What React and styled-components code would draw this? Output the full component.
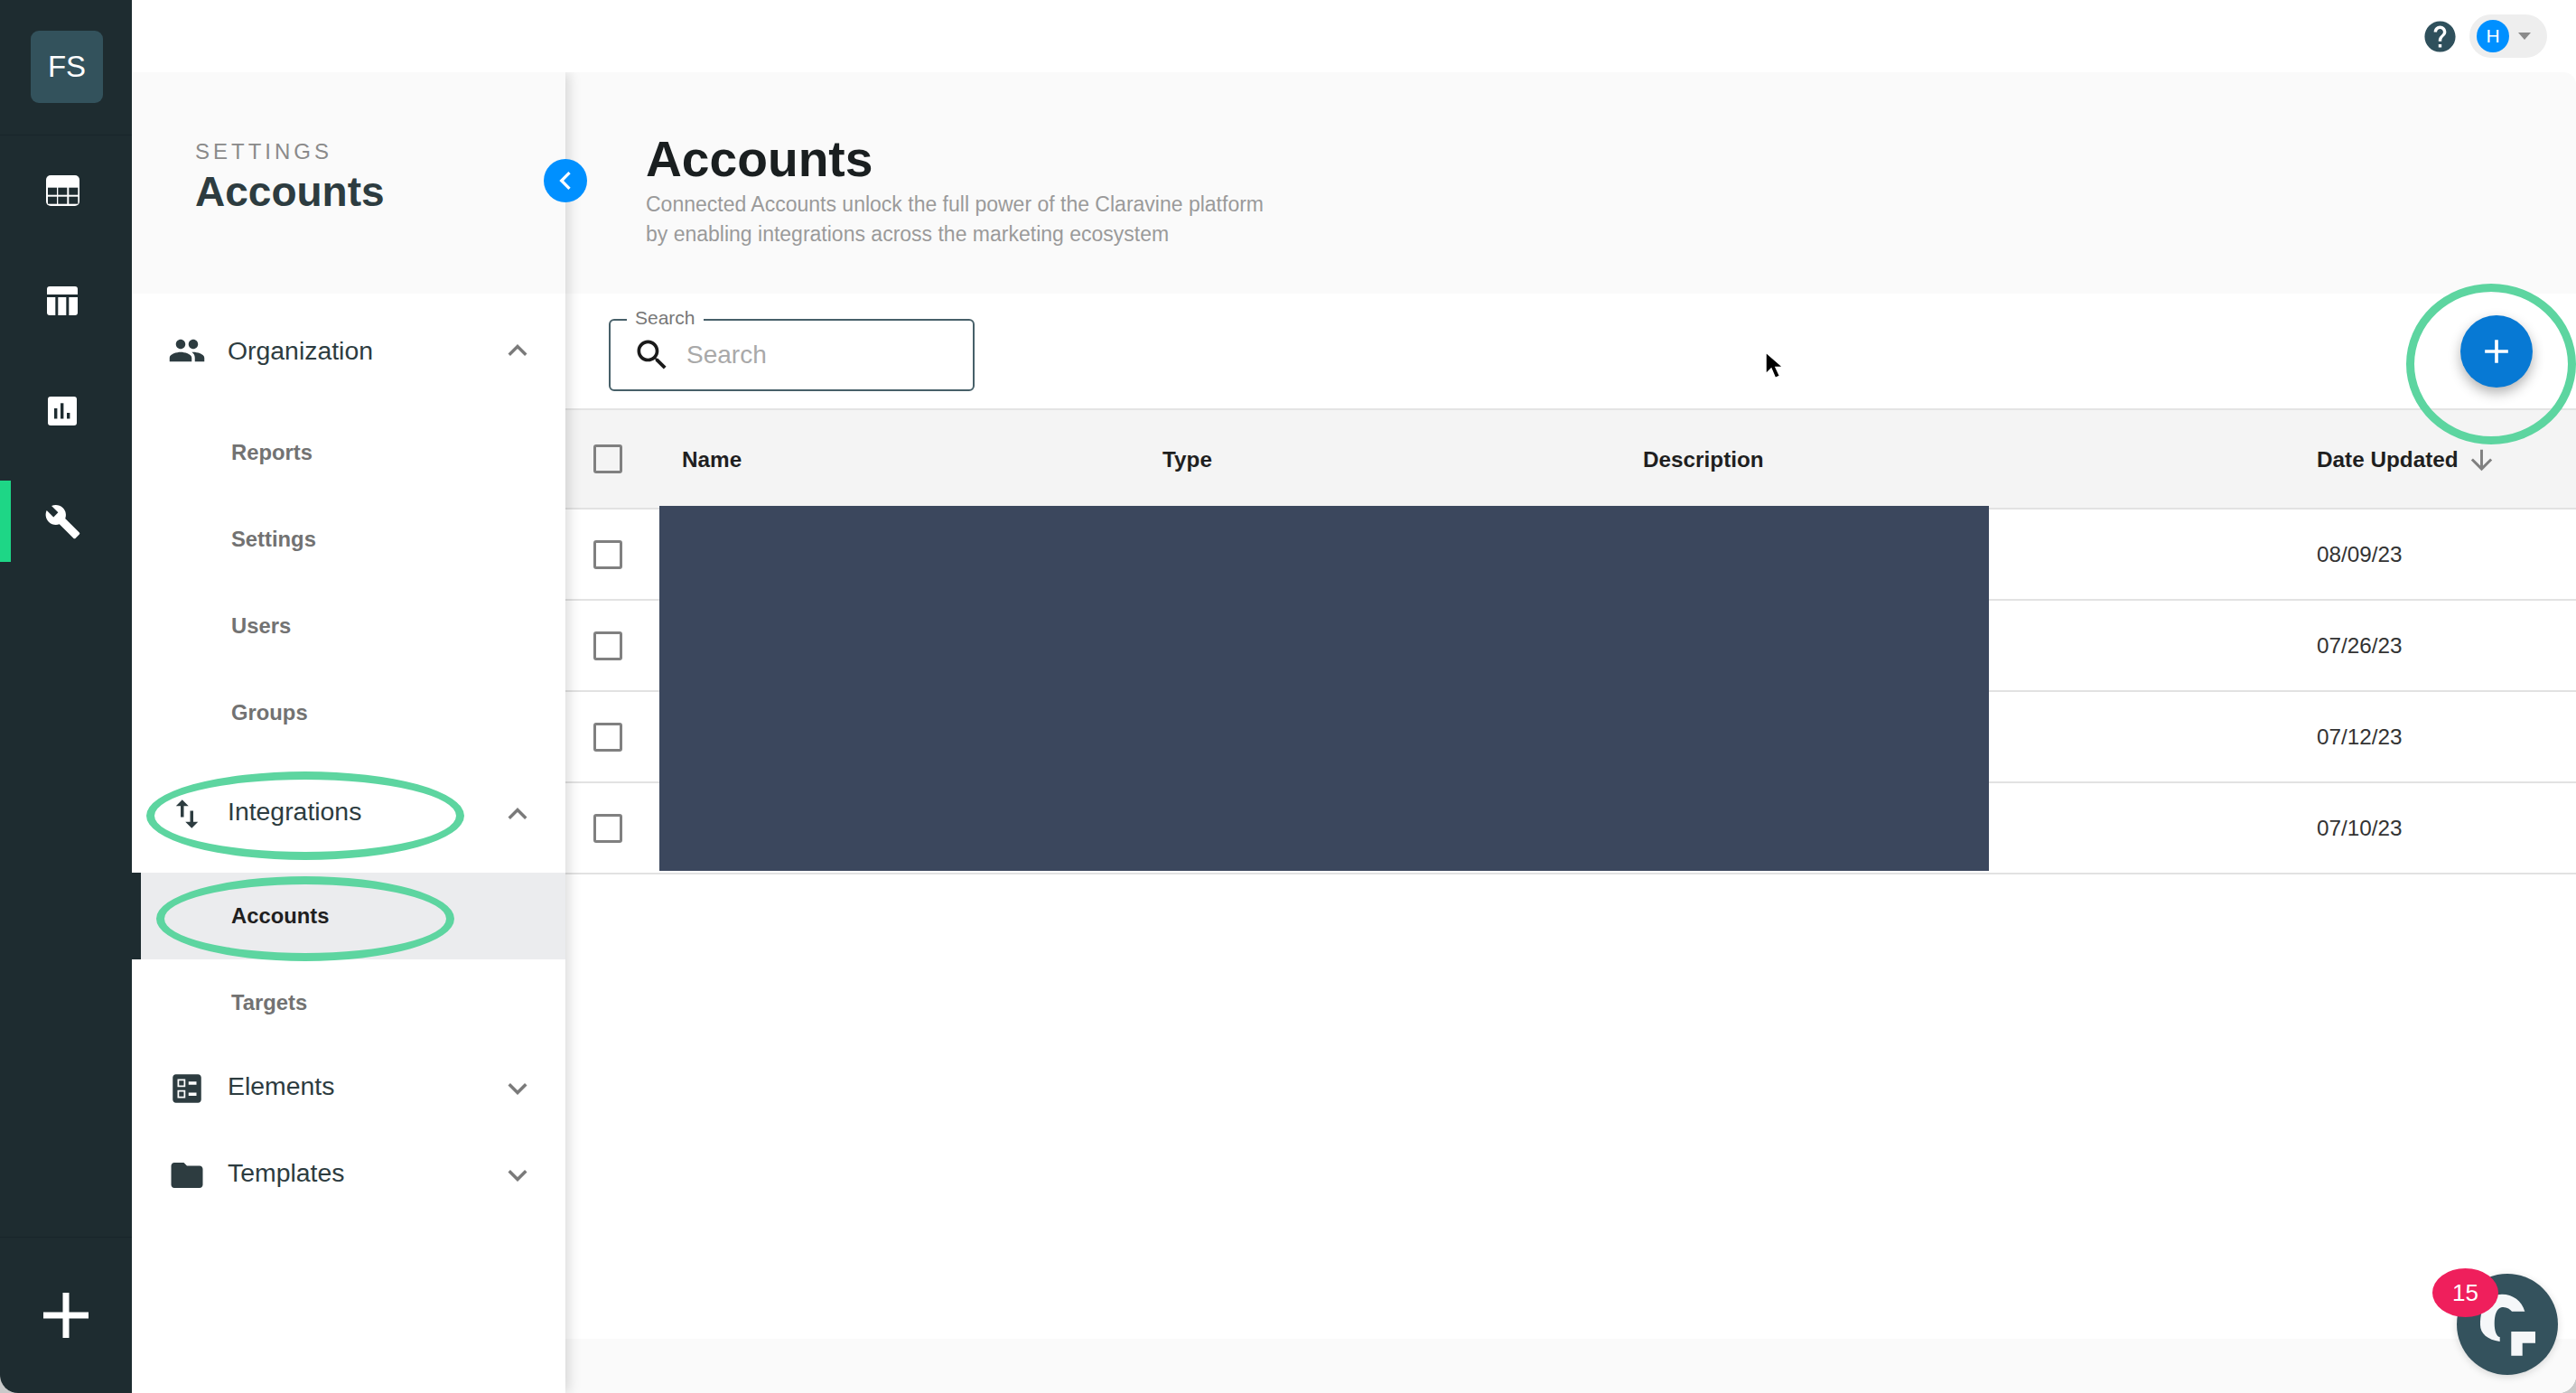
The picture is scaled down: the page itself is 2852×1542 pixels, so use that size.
import styled, { createGlobalStyle } from "styled-components";

const GlobalStyle = createGlobalStyle`
  html, body {
    margin: 0;
    height: 100%;
    background: #c9c9c9;
    font-family: "Liberation Sans", Arial, sans-serif;
  }
  #root {
    height: 100%;
  }
  * {
    box-sizing: border-box;
  }
`;

const ICONS = {
  people:
    "M16 11c1.66 0 2.99-1.34 2.99-3S17.66 5 16 5c-1.66 0-3 1.34-3 3s1.34 3 3 3zm-8 0c1.66 0 2.99-1.34 2.99-3S9.66 5 8 5C6.34 5 5 6.34 5 8s1.34 3 3 3zm0 2c-2.33 0-7 1.17-7 3.5V19h14v-2.5c0-2.33-4.67-3.5-7-3.5zm8 0c-.29 0-.62.02-.97.05 1.16.84 1.97 1.97 1.97 3.45V19h6v-2.5c0-2.33-4.67-3.5-7-3.5z",
  importExport: "M9 3 5 6.99h3V14h2V6.99h3L9 3zm7 14.01V10h-2v7.01h-3L15 21l4-3.99h-3z",
  ballot:
    "M13 9.5h5v-2h-5v2zm0 7h5v-2h-5v2zm6 4.5H5c-1.1 0-2-.9-2-2V5c0-1.1.9-2 2-2h14c1.1 0 2 .9 2 2v14c0 1.1-.9 2-2 2zM6 11h5V6H6v5zm1-4h3v3H7V7zM6 18h5v-5H6v5zm1-4h3v3H7v-3z",
  folder: "M10 4H4c-1.1 0-1.99.9-1.99 2L2 18c0 1.1.9 2 2 2h16c1.1 0 2-.9 2-2V8c0-1.1-.9-2-2-2h-8l-2-2z",
  wrench:
    "M22.7 19l-9.1-9.1c.9-2.3.4-5-1.5-6.9-2-2-5-2.4-7.4-1.3L9 6 6 9 1.6 4.7C.4 7.1.9 10.1 2.9 12.1c1.9 1.9 4.6 2.4 6.9 1.5l9.1 9.1c.4.4 1 .4 1.4 0l2.3-2.3c.5-.4.5-1.1.1-1.4z",
  search:
    "M15.5 14h-.79l-.28-.27C15.41 12.59 16 11.11 16 9.5 16 5.91 13.09 3 9.5 3S3 5.91 3 9.5 5.91 16 9.5 16c1.61 0 3.09-.59 4.23-1.57l.27.28v.79l5 4.99L20.49 19l-4.99-5zm-6 0C7.01 14 5 11.99 5 9.5S7.01 5 9.5 5 14 7.01 14 9.5 11.99 14 9.5 14z",
  help:
    "M12 2C6.48 2 2 6.48 2 12s4.48 10 10 10 10-4.48 10-10S17.52 2 12 2zm1 17h-2v-2h2v2zm2.07-7.75l-.9.92C13.45 12.9 13 13.5 13 15h-2v-.5c0-1.1.45-2.1 1.17-2.83l1.24-1.26c.37-.36.59-.86.59-1.41 0-1.1-.9-2-2-2s-2 .9-2 2H8c0-2.21 1.79-4 4-4s4 1.79 4 4c0 .88-.36 1.68-.93 2.25z",
  less: "M12 8l-6 6 1.41 1.41L12 10.83l4.59 4.58L18 14z",
  more: "M16.59 8.59L12 13.17 7.41 8.59 6 10l6 6 6-6z",
  left: "M15.41 7.41L14 6l-6 6 6 6 1.41-1.41L10.83 12z",
  down: "M20 12l-1.41-1.41L13 16.17V4h-2v12.17l-5.58-5.59L4 12l8 8 8-8z",
  plus: "M19 13h-6v6h-2v-6H5v-2h6V5h2v6h6v2z",
};

const Icon = ({ name, size = 42, color = "currentColor" }) => (
  <svg width={size} height={size} viewBox="0 0 24 24" fill={color} fillRule="evenodd" style={{ flexShrink: 0 }}>
    <path d={ICONS[name]} />
  </svg>
);

const Shell = styled.div`
  display: flex;
  height: 100vh;
  overflow: hidden;
  border-radius: 0 0 20px 20px;
  background: #fff;
`;

const Rail = styled.aside`
  display: flex;
  flex-direction: column;
  flex: 0 0 146px;
  background: #1e2c30;
`;

const RailTop = styled.div`
  display: flex;
  align-items: center;
  justify-content: center;
  height: 150px;
  padding: 0 0 2px 2px;
  border-bottom: 1px solid #18252a;
`;

const OrgBadge = styled.div`
  display: flex;
  align-items: center;
  justify-content: center;
  width: 80px;
  height: 80px;
  border-radius: 9px;
  background: #33525c;
  color: #fff;
  font-size: 33px;
`;

const RailItem = styled.div`
  position: relative;
  display: flex;
  align-items: center;
  justify-content: center;
  height: 122px;
  padding-right: 8px;

  ${(p) =>
    p.$active &&
    `&::before {
      content: "";
      position: absolute;
      left: 0;
      top: 16px;
      width: 12px;
      height: 90px;
      background: #1ed686;
    }`}
`;

const RailBottom = styled.div`
  display: flex;
  align-items: center;
  justify-content: center;
  margin-top: auto;
  height: 173px;
  padding-right: 1px;
  border-top: 1px solid #18252a;
`;

const Content = styled.div`
  display: flex;
  flex-direction: column;
  flex: 1;
  min-width: 0;
`;

const TopBar = styled.header`
  display: flex;
  align-items: center;
  justify-content: flex-end;
  gap: 12px;
  flex: 0 0 80px;
  padding-right: 32px;
  background: #fff;
`;

const UserPill = styled.div`
  display: flex;
  align-items: center;
  gap: 10px;
  width: 86px;
  height: 48px;
  padding-left: 8px;
  border-radius: 24px;
  background: #eeeeee;
`;

const Avatar = styled.div`
  display: flex;
  align-items: center;
  justify-content: center;
  width: 36px;
  height: 36px;
  border-radius: 50%;
  background: #0090ff;
  color: #fff;
  font-size: 21px;
`;

const Caret = styled.span`
  width: 0;
  height: 0;
  border-left: 7px solid transparent;
  border-right: 7px solid transparent;
  border-top: 8px solid #8a8a8a;
`;

const Workspace = styled.div`
  display: flex;
  flex: 1;
  min-height: 0;
`;

const SubNav = styled.nav`
  position: relative;
  z-index: 2;
  flex: 0 0 480px;
  background: #fff;
  box-shadow: 3px 0 14px rgba(0, 0, 0, 0.16);
  clip-path: inset(0 -30px 0 0);
`;

const SubNavHeader = styled.div`
  height: 245px;
  padding: 74px 0 0 70px;
  background: #fafafa;
`;

const Eyebrow = styled.div`
  color: #8a8a8a;
  font-size: 24px;
  line-height: 28px;
  letter-spacing: 4px;
`;

const SubNavTitle = styled.div`
  margin-top: 4px;
  color: #2d3c40;
  font-size: 46px;
  font-weight: 700;
  line-height: 52px;
`;

const CollapseButton = styled.button`
  position: absolute;
  top: 96px;
  right: -24px;
  display: flex;
  align-items: center;
  justify-content: center;
  width: 48px;
  height: 48px;
  padding: 0;
  border: 0;
  border-radius: 50%;
  background: #0090ff;
  color: #fff;
`;

const Groups = styled.div`
  padding-top: 18px;
`;

const Group = styled.section`
  margin-bottom: ${(p) => p.$gap}px;
`;

const GroupHead = styled.div`
  display: flex;
  align-items: center;
  height: 90px;
  padding: ${(p) => (p.$lower ? 3 : 0)}px 32px 0 40px;
  color: #2d3c40;
  font-size: 28.4px;
`;

const GroupLabel = styled.span`
  flex: 1;
  margin-left: 24px;
  padding-bottom: ${(p) => (p.$lower ? 5 : 0)}px;
`;

const Chevron = styled.span`
  display: flex;
  color: #7a7a7a;
`;

const SubList = styled.div`
  margin-top: ${(p) => (p.$lower ? 22 : 20)}px;
`;

const SubItem = styled.div`
  display: flex;
  align-items: center;
  height: 96px;
  padding-left: ${(p) => (p.$active ? 100 : 110)}px;
  border-left: ${(p) => (p.$active ? "10px solid #1e2c30" : "0")};
  background: ${(p) => (p.$active ? "#ebecee" : "transparent")};
  color: ${(p) => (p.$active ? "#1f1f1f" : "#727272")};
  font-size: 23.8px;
  font-weight: 700;
`;

const Ring = styled.span`
  position: absolute;
  z-index: 3;
  left: ${(p) => p.$left}px;
  top: ${(p) => p.$top}px;
  width: ${(p) => p.$w}px;
  height: ${(p) => p.$h}px;
  border: 9px solid #5dd5a0;
  border-radius: 50%;
  pointer-events: none;
`;

const Main = styled.main`
  position: relative;
  display: flex;
  flex-direction: column;
  flex: 1;
  min-width: 0;
  background: #fff;
`;

const PageHeader = styled.div`
  height: 245px;
  padding: 64px 0 0 89px;
  border-radius: 0 14px 0 0;
  background: #fafafa;
`;

const PageTitle = styled.h1`
  margin: 0;
  color: #1a1f20;
  font-size: 55.2px;
  font-weight: 700;
  line-height: 64px;
`;

const PageText = styled.p`
  margin: 0;
  padding-top: 2px;
  color: #9a9a9a;
  font-size: 23px;
  line-height: 33px;
`;

const Toolbar = styled.div`
  position: relative;
  display: flex;
  align-items: center;
  justify-content: space-between;
  flex: 0 0 129px;
  padding: 0 48px;
  border-bottom: 2px solid #e4e4e4;
`;

const SearchBox = styled.div`
  position: relative;
  display: flex;
  align-items: center;
  gap: 16px;
  width: 405px;
  height: 80px;
  margin-top: 8px;
  padding-left: 24px;
  border: 2px solid #476069;
  border-radius: 6px;
  color: #1a1a1a;
`;

const SearchLegend = styled.span`
  position: absolute;
  top: -15px;
  left: 18px;
  padding: 0 9px;
  background: #fff;
  color: #777;
  font-size: 21px;
  line-height: 24px;
`;

const SearchPlaceholder = styled.span`
  padding-top: 1px;
  color: #a9a9a9;
  font-size: 28px;
`;

const Fab = styled.button`
  display: flex;
  align-items: center;
  justify-content: center;
  width: 80px;
  height: 80px;
  padding: 0;
  border: 0;
  border-radius: 50%;
  background: #0779d4;
  color: #fff;
  box-shadow: 0 6px 14px rgba(0, 0, 0, 0.3);
`;

const Cursor = styled.svg`
  position: absolute;
  left: 1327px;
  top: 63px;
`;

const TableWrap = styled.div`
  position: relative;
  flex: 1;
`;

const Row = styled.div`
  display: grid;
  grid-template-columns: 129px 532px 532px 746px 1fr;
  align-items: center;
  height: ${(p) => (p.$head ? 110 : 101)}px;
  border-bottom: 2px solid #e2e2e2;
  background: ${(p) => (p.$head ? "#f4f4f4" : "#fff")};
  color: ${(p) => (p.$head ? "#1f1f1f" : "#333")};
  font-size: 24.3px;
  font-weight: ${(p) => (p.$head ? 700 : 400)};
`;

const CheckCell = styled.div`
  padding-left: 31px;
`;

const Checkbox = styled.span`
  display: block;
  width: 32px;
  height: 32px;
  border: 3px solid #808080;
  border-radius: 3px;
`;

const HeadLabel = styled.div`
  padding-top: 2px;
`;

const DateHead = styled(HeadLabel)`
  display: flex;
  align-items: center;
  gap: 8px;
`;

const SortIcon = styled.span`
  display: flex;
  color: #808080;
`;

const Redaction = styled.div`
  position: absolute;
  left: 104px;
  top: 106px;
  width: 1472px;
  height: 404px;
  background: #3b475d;
`;

const Footer = styled.div`
  flex: 0 0 60px;
  background: #fafafa;
`;

const ChatWidget = styled.div`
  position: absolute;
  right: 20px;
  bottom: 20px;
  width: 112px;
  height: 112px;
  border-radius: 50%;
  background: #34525d;
  box-shadow: 0 2px 8px rgba(0, 0, 0, 0.15);
`;

const ChatBadge = styled.span`
  position: absolute;
  left: -27px;
  top: -6px;
  display: flex;
  align-items: center;
  justify-content: center;
  width: 73px;
  height: 54px;
  border-radius: 50%;
  background: #ef1f5c;
  color: #fff;
  font-size: 26px;
`;

const groups = [
  { label: "Organization", icon: "people", open: true, gap: 17, items: ["Reports", "Settings", "Users", "Groups"] },
  { label: "Integrations", icon: "importExport", open: true, gap: 0, lower: true, items: ["Accounts", "Targets"] },
  { label: "Elements", icon: "ballot", gap: 6, lower: true },
  { label: "Templates", icon: "folder", gap: 0, lower: true },
];

const dates = ["08/09/23", "07/26/23", "07/12/23", "07/10/23"];

const GridIcon = () => (
  <svg width="37" height="34" viewBox="0 0 37 34">
    <rect width="37" height="34" rx="5" fill="#fff" />
    {[13.7, 23.7].map((y) =>
      [2, 13.3, 25.3].map((x) => <rect key={`${x}-${y}`} x={x} y={y} width="10" height="8" fill="#1e2c30" />)
    )}
  </svg>
);

const ColumnsIcon = () => (
  <svg width="34" height="32" viewBox="0 0 34 32" fill="#fff">
    <path d="M3 0h28a3 3 0 0 1 3 3v6H0V3a3 3 0 0 1 3-3z" />
    <path d="M0 12h9.3v20H3a3 3 0 0 1-3-3z" />
    <rect x="12.3" y="12" width="9" height="20" />
    <path d="M24.3 12H34v17a3 3 0 0 1-3 3h-6.7z" />
  </svg>
);

const ChartIcon = () => (
  <svg width="32" height="32" viewBox="0 0 32 32">
    <rect width="32" height="32" rx="3" fill="#fff" />
    <rect x="7" y="13" width="3.4" height="11.5" fill="#1e2c30" />
    <rect x="14" y="7.3" width="3.4" height="17.2" fill="#1e2c30" />
    <rect x="21" y="18" width="3.4" height="6.5" fill="#1e2c30" />
  </svg>
);

const ChatLogo = () => (
  <svg width="112" height="112" viewBox="0 0 112 112" fill="#f5f7f9">
    <path d="M47.7 75C34 73 26 66 26 56.7 26 34 36 22.7 50 22.7c12 0 22 7.3 25.3 19H61C58 38 54 37 50 37c-6 1-8.300 9-8.300 18 0 8 2.300 15 6 15z" />
    <path d="M60.300 64H87v12.700H72.700v14H60.300z" />
  </svg>
);

const App = () => (
  <>
    <GlobalStyle />
    <Shell>
      <Rail>
        <RailTop>
          <OrgBadge>FS</OrgBadge>
        </RailTop>
        <RailItem>
          <GridIcon />
        </RailItem>
        <RailItem>
          <ColumnsIcon />
        </RailItem>
        <RailItem>
          <ChartIcon />
        </RailItem>
        <RailItem $active>
          <Icon name="wrench" size={41} color="#fff" />
        </RailItem>
        <RailBottom>
          <svg width="50" height="50" viewBox="0 0 50 50" fill="#fff">
            <rect x="21.500" width="7" height="50" />
            <rect y="21.500" width="50" height="7" />
          </svg>
        </RailBottom>
      </Rail>

      <Content>
        <TopBar>
          <Icon name="help" size={41} color="#2f505c" />
          <UserPill>
            <Avatar>H</Avatar>
            <Caret />
          </UserPill>
        </TopBar>

        <Workspace>
          <SubNav>
            <SubNavHeader>
              <Eyebrow>SETTINGS</Eyebrow>
              <SubNavTitle>Accounts</SubNavTitle>
            </SubNavHeader>
            <CollapseButton>
              <Icon name="left" size={40} />
            </CollapseButton>
            <Groups>
              {groups.map((group) => (
                <Group key={group.label} $gap={group.gap}>
                  <GroupHead $lower={group.lower}>
                    <Icon name={group.icon} />
                    <GroupLabel $lower={group.lower}>{group.label}</GroupLabel>
                    <Chevron>
                      <Icon name={group.open ? "less" : "more"} />
                    </Chevron>
                  </GroupHead>
                  {group.open && (
                    <SubList $lower={group.lower}>
                      {group.items.map((item) => (
                        <SubItem key={item} $active={item === "Accounts"}>
                          {item}
                        </SubItem>
                      ))}
                    </SubList>
                  )}
                </Group>
              ))}
            </Groups>
            <Ring $left={16} $top={774} $w={352} $h={98} />
            <Ring $left={27} $top={890} $w={330} $h={94} />
          </SubNav>

          <Main>
            <PageHeader>
              <PageTitle>Accounts</PageTitle>
              <PageText>
                Connected Accounts unlock the full power of the Claravine platform
                <br />
                by enabling integrations across the marketing ecosystem
              </PageText>
            </PageHeader>

            <Toolbar>
              <SearchBox>
                <SearchLegend>Search</SearchLegend>
                <Icon name="search" size={44} />
                <SearchPlaceholder>Search</SearchPlaceholder>
              </SearchBox>
              <Fab>
                <Icon name="plus" size={44} />
              </Fab>
              <Cursor width="24" height="34" viewBox="0 0 24 34">
                <path
                  d="M2 2v24l6-6 4.500 10.500 5-2.200-4.500-9.800H21z"
                  fill="#000"
                  stroke="#fff"
                  strokeWidth="1.500"
                />
              </Cursor>
            </Toolbar>

            <TableWrap>
              <Row $head>
                <CheckCell>
                  <Checkbox />
                </CheckCell>
                <HeadLabel>Name</HeadLabel>
                <HeadLabel>Type</HeadLabel>
                <HeadLabel>Description</HeadLabel>
                <DateHead>
                  Date Updated
                  <SortIcon>
                    <Icon name="down" size={35} />
                  </SortIcon>
                </DateHead>
              </Row>
              {dates.map((date) => (
                <Row key={date}>
                  <CheckCell>
                    <Checkbox />
                  </CheckCell>
                  <div />
                  <div />
                  <div />
                  <div>{date}</div>
                </Row>
              ))}
              <Redaction />
            </TableWrap>

            <Footer />

            <Ring $left={2038} $top={234} $w={188} $h={178} />
            <ChatWidget>
              <ChatLogo />
              <ChatBadge>15</ChatBadge>
            </ChatWidget>
          </Main>
        </Workspace>
      </Content>
    </Shell>
  </>
);

export default App;
